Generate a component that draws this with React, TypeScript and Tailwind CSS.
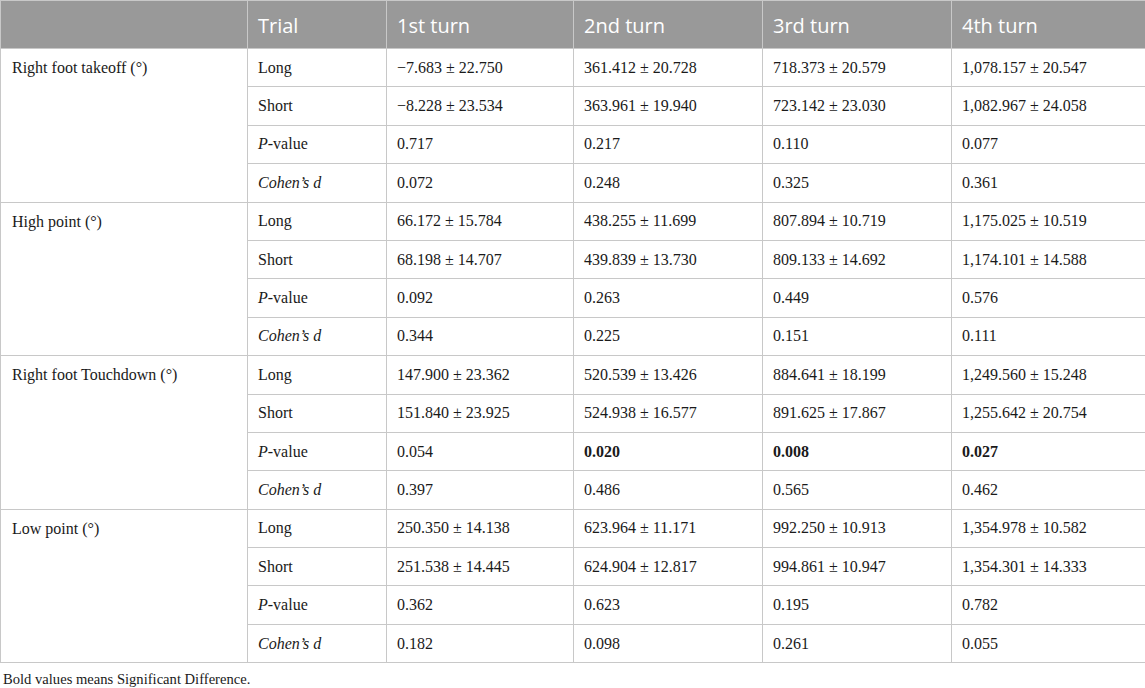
import React from "react";

type Row = { trial: React.ReactNode; values: string[]; bold?: boolean[] };

const pValue = (
  <>
    <span className="italic">P</span>-value
  </>
);
const cohen = <span className="italic">Cohen’s d</span>;

const groups: { label: string; rows: Row[] }[] = [
  {
    label: "Right foot takeoff (°)",
    rows: [
      { trial: "Long", values: ["−7.683 ± 22.750", "361.412 ± 20.728", "718.373 ± 20.579", "1,078.157 ± 20.547"] },
      { trial: "Short", values: ["−8.228 ± 23.534", "363.961 ± 19.940", "723.142 ± 23.030", "1,082.967 ± 24.058"] },
      { trial: pValue, values: ["0.717", "0.217", "0.110", "0.077"] },
      { trial: cohen, values: ["0.072", "0.248", "0.325", "0.361"] },
    ],
  },
  {
    label: "High point (°)",
    rows: [
      { trial: "Long", values: ["66.172 ± 15.784", "438.255 ± 11.699", "807.894 ± 10.719", "1,175.025 ± 10.519"] },
      { trial: "Short", values: ["68.198 ± 14.707", "439.839 ± 13.730", "809.133 ± 14.692", "1,174.101 ± 14.588"] },
      { trial: pValue, values: ["0.092", "0.263", "0.449", "0.576"] },
      { trial: cohen, values: ["0.344", "0.225", "0.151", "0.111"] },
    ],
  },
  {
    label: "Right foot Touchdown (°)",
    rows: [
      { trial: "Long", values: ["147.900 ± 23.362", "520.539 ± 13.426", "884.641 ± 18.199", "1,249.560 ± 15.248"] },
      { trial: "Short", values: ["151.840 ± 23.925", "524.938 ± 16.577", "891.625 ± 17.867", "1,255.642 ± 20.754"] },
      { trial: pValue, values: ["0.054", "0.020", "0.008", "0.027"], bold: [false, true, true, true] },
      { trial: cohen, values: ["0.397", "0.486", "0.565", "0.462"] },
    ],
  },
  {
    label: "Low point (°)",
    rows: [
      { trial: "Long", values: ["250.350 ± 14.138", "623.964 ± 11.171", "992.250 ± 10.913", "1,354.978 ± 10.582"] },
      { trial: "Short", values: ["251.538 ± 14.445", "624.904 ± 12.817", "994.861 ± 10.947", "1,354.301 ± 14.333"] },
      { trial: pValue, values: ["0.362", "0.623", "0.195", "0.782"] },
      { trial: cohen, values: ["0.182", "0.098", "0.261", "0.055"] },
    ],
  },
];

const headers = ["", "Trial", "1st turn", "2nd turn", "3rd turn", "4th turn"];

export default function App() {
  return (
    <div className="w-[1145px] bg-white text-[#1a1a1a] font-['Liberation_Serif',serif]">
      <table className="w-[1145px] table-fixed border-collapse">
        <colgroup>
          <col className="w-[247px]" />
          <col className="w-[139px]" />
          <col className="w-[187px]" />
          <col className="w-[189px]" />
          <col className="w-[189px]" />
          <col className="w-[194px]" />
        </colgroup>
        <thead>
          <tr className="h-[48px] bg-[#999999]">
            {headers.map((h, i) => (
              <th
                key={i}
                className="border border-[#c8c8c8] px-[10px] pt-[2px] text-left align-middle text-[20px] font-normal text-white font-['Open_Sans',sans-serif]"
              >
                {h}
              </th>
            ))}
          </tr>
        </thead>
        <tbody className="text-[16px] leading-[20px]">
          {groups.map((g) =>
            g.rows.map((r, ri) => (
              <tr key={g.label + ri} className="h-[38.4px]">
                {ri === 0 && (
                  <td rowSpan={4} className="border border-[#c8c8c8] px-[11px] pt-[9px] align-top">
                    {g.label}
                  </td>
                )}
                <td className="border border-[#c8c8c8] px-[10px] align-middle">{r.trial}</td>
                {r.values.map((v, vi) => (
                  <td
                    key={vi}
                    className={`border border-[#c8c8c8] px-[10px] align-middle ${r.bold && r.bold[vi] ? "font-bold" : ""}`}
                  >
                    {v}
                  </td>
                ))}
              </tr>
            ))
          )}
        </tbody>
      </table>
      <p className="mt-[6px] pl-[3px] text-[14.6px] leading-[20px]">Bold values means Significant Difference.</p>
    </div>
  );
}
